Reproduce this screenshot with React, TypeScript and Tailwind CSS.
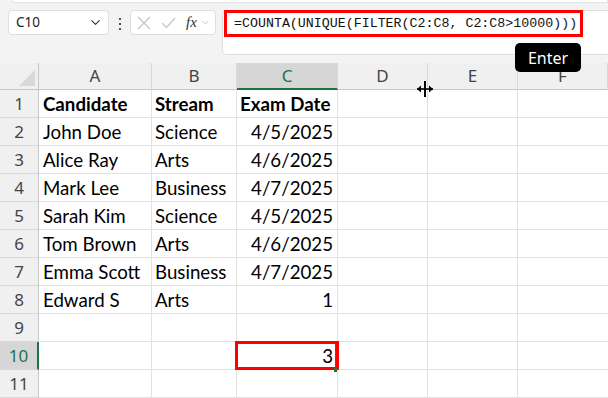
import { ChevronDown } from "lucide-react";

const cols = ["A", "B", "C", "D", "E", "F"];
const widths = ["w-[113px]", "w-[85px]", "w-[101px]", "w-[90px]", "w-[90px]", "w-[90px]"];

type Row = { a?: string; b?: string; c?: string; bold?: boolean };

const rows: Row[] = [
  { a: "Candidate", b: "Stream", c: "Exam Date", bold: true },
  { a: "John Doe", b: "Science", c: "4/5/2025" },
  { a: "Alice Ray", b: "Arts", c: "4/6/2025" },
  { a: "Mark Lee", b: "Business", c: "4/7/2025" },
  { a: "Sarah Kim", b: "Science", c: "4/5/2025" },
  { a: "Tom Brown", b: "Arts", c: "4/6/2025" },
  { a: "Emma Scott", b: "Business", c: "4/7/2025" },
  { a: "Edward S", b: "Arts", c: "1" },
  {},
  { c: "3" },
  {},
];

const Toolbar = () => {
  return (
    <div className="relative h-[63px] bg-[#f3f3f3]">
      <div className="absolute left-[10px] right-0 top-[-6px] h-[9px] rounded-bl-[6px] border border-[#e2e2e2] bg-white" />
      <div className="flex items-start pt-[10px] pl-[8px]">
        {/* name box */}
        <div className="flex h-[25px] w-[101px] items-center justify-between rounded-[4px] border border-[#dedede] bg-white pl-[7px] pr-[5px] text-[13.5px] text-[#222]">
          <span>C10</span>
          <ChevronDown size={15} strokeWidth={1.8} className="text-[#333]" />
        </div>
        {/* dots */}
        <div className="flex w-[21px] flex-col items-center gap-[3px] pt-[8px]">
          <span className="h-[2px] w-[2px] bg-[#555]" />
          <span className="h-[2px] w-[2px] bg-[#555]" />
          <span className="h-[2px] w-[2px] bg-[#555]" />
        </div>
        {/* x / check / fx */}
        <div className="flex h-[25px] w-[86px] items-center rounded-[4px] border border-[#dedede] bg-white pl-[6px]">
          <svg width="14" height="14" viewBox="0 0 14 14" className="mr-[10px]">
            <path d="M1 1 L13 13 M13 1 L1 13" stroke="#c4c4c4" strokeWidth="1.2" fill="none" />
          </svg>
          <svg width="15" height="12" viewBox="0 0 15 12" className="mr-[10px]">
            <path d="M1 6 L5.5 10.5 L14 1" stroke="#c4c4c4" strokeWidth="1.2" fill="none" />
          </svg>
          <span className="font-['Liberation_Serif',serif] text-[15px] italic leading-none text-[#333]">fx</span>
          <ChevronDown size={11} strokeWidth={1.5} className="ml-[3px] text-[#aaa]" />
        </div>
        {/* formula bar */}
        <div className="relative ml-[6px] h-[45px] flex-1 rounded-l-[5px] border border-r-0 border-[#dedede] bg-white">
          <div className="absolute left-[1px] top-[-1px] flex h-[27px] w-[359px] items-center border-[3px] border-[#ff0000] pl-[7px] font-['Liberation_Mono',monospace] text-[13.3px] text-[#111]">
            =COUNTA(UNIQUE(FILTER(C2:C8, C2:C8&gt;10000)))
          </div>
        </div>
      </div>
    </div>
  );
};

const Grid = () => {
  return (
    <div className="font-['Lato','Noto_Sans',sans-serif] text-[18.7px] text-black">
      {/* column headers */}
      <div className="flex h-[27px] bg-[#f0f0f0]">
        <div className="relative w-[39px] border-r border-b border-[#c8c8c8]">
          <svg width="16" height="16" viewBox="0 0 16 16" className="absolute right-[3px] bottom-[3px]">
            <path d="M16 0 L16 16 L0 16 Z" fill="#d8d8d8" />
          </svg>
        </div>
        {cols.map((c, i) => (
          <div
            key={c}
            className={`${widths[i]} flex items-center justify-center border-r border-[#d9d9d9] ${
              c === "C"
                ? "border-b-2 border-b-[#217346] bg-[#d6d6d6] text-[#217346]"
                : "border-b border-b-[#c8c8c8] text-[#444]"
            } font-['Noto_Sans',sans-serif] text-[17px]`}
          >
            {c}
          </div>
        ))}
      </div>
      {rows.map((r, idx) => {
        const n = idx + 1;
        const sel = n === 10;
        return (
          <div key={n} className="flex h-[28px]">
            <div
              className={`flex w-[39px] items-center justify-center border-b border-[#d9d9d9] pt-[1px] font-['Noto_Sans',sans-serif] text-[17px] ${
                sel
                  ? "border-r-2 border-r-[#217346] bg-[#d6d6d6] text-[#217346]"
                  : "border-r border-r-[#c8c8c8] bg-[#f0f0f0] text-[#444]"
              }`}
            >
              {n}
            </div>
            <div className={`flex w-[113px] items-center border-r border-b border-[#e1e1e1] pt-[2px] pl-[4px] ${r.bold ? "font-bold" : ""}`}>
              {r.a}
            </div>
            <div className={`flex w-[85px] items-center border-r border-b border-[#e1e1e1] pt-[2px] pl-[3px] ${r.bold ? "font-bold" : ""}`}>
              {r.b}
            </div>
            <div
              className={`relative flex w-[101px] items-center border-r border-b border-[#e1e1e1] pt-[2px] pr-[4px] ${
                r.bold ? "justify-start pl-[3px] font-bold" : "justify-end"
              }`}
            >
              {r.c}
              {sel && (
                <>
                  <div className="absolute right-[0px] top-[1px] h-[28px] w-[2px] bg-[#217346]" />
                  <div className="absolute -left-[2px] -right-[2px] -top-[1px] -bottom-[1px] border-[3px] border-[#ff0000]" />
                  <div className="absolute -right-[1px] -bottom-[3px] h-[4px] w-[4px] bg-[#217346]" />
                </>
              )}
            </div>
            <div className="w-[90px] border-r border-b border-[#e1e1e1]" />
            <div className="w-[90px] border-r border-b border-[#e1e1e1]" />
            <div className="w-[90px] border-b border-[#e1e1e1]" />
          </div>
        );
      })}
    </div>
  );
};

export default function App() {
  return (
    <div className="relative h-[398px] w-[608px] overflow-hidden bg-white font-['Noto_Sans',sans-serif]">
      <Toolbar />
      <Grid />
      {/* tooltip */}
      <div className="absolute left-[515px] top-[43px] flex h-[29px] w-[66px] items-center justify-center rounded-[5px] bg-black text-[16px] text-white">
        Enter
      </div>
      {/* resize cursor */}
      <svg width="20" height="18" viewBox="0 0 20 18" className="absolute left-[415px] top-[80px]">
        <path d="M10 1 V17" stroke="#000" strokeWidth="2" />
        <path d="M2 9 H18" stroke="#000" strokeWidth="1.6" />
        <path d="M2 9 L6 5.5 V12.5 Z M18 9 L14 5.5 V12.5 Z" fill="#000" />
      </svg>
    </div>
  );
}
